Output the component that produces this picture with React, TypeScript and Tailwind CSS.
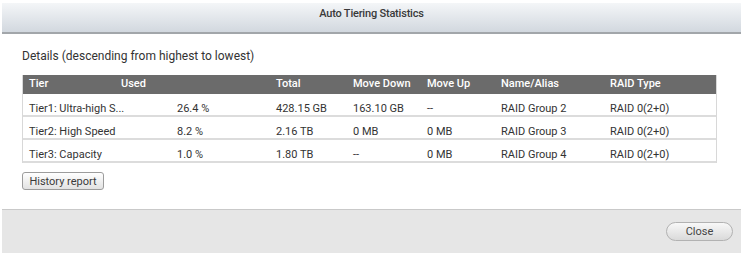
import React from "react";

const cols = "grid-cols-[92px_155px_77px_74px_74px_109px_1fr]";

const rows = [
  ["Tier1: Ultra-high S...", "26.4 %", "428.15 GB", "163.10 GB", "--", "RAID Group 2", "RAID 0(2+0)"],
  ["Tier2: High Speed", "8.2 %", "2.16 TB", "0 MB", "0 MB", "RAID Group 3", "RAID 0(2+0)"],
  ["Tier3: Capacity", "1.0 %", "1.80 TB", "--", "0 MB", "RAID Group 4", "RAID 0(2+0)"],
];

export default function App() {
  return (
    <div className="w-[745px] h-[253px] bg-white overflow-hidden font-['Roboto',sans-serif] pt-[3px] pl-[2px]">
      <div className="w-[739px] h-[250px] flex flex-col">
        <div className="h-[31px] shrink-0 bg-gradient-to-b from-[#f4f6f8] to-[#d2d8df] border-b-2 border-[#a2a6aa] flex items-center justify-center pb-[6px]">
          <span className="text-[11px] font-medium text-[#3a3a3a] tracking-[-0.2px]">Auto Tiering Statistics</span>
        </div>
        <div className="flex-1 px-[20px] pt-[14px]">
          <div className="text-[12px] leading-[16px] text-[#333]">Details (descending from highest to lowest)</div>
          <div className="mt-[11px] w-[695px] border-x border-[#d8d8d8]">
            <div className={`grid ${cols} h-[19px] bg-[#6b6b6b] items-center text-[11px] font-medium text-white`}>
              <div className="pl-[6px]">Tier</div>
              <div className="pl-[6px]">Used</div>
              <div className="pl-[6px]">Total</div>
              <div className="pl-[6px]">Move Down</div>
              <div className="pl-[6px]">Move Up</div>
              <div className="pl-[6px]">Name/Alias</div>
              <div className="pl-[6px]">RAID Type</div>
            </div>
            {rows.map((r, i) => (
              <div
                key={i}
                className={`grid ${cols} h-[23px] pt-[8px] leading-[13px] text-[11px] text-[#333] border-b-2 border-[#dcdcdc]`}
              >
                <div className="pl-[6px] whitespace-nowrap">{r[0]}</div>
                <div className="pl-[62px]">{r[1]}</div>
                <div className="pl-[6px]">{r[2]}</div>
                <div className="pl-[6px]">{r[3]}</div>
                <div className="pl-[6px]">{r[4]}</div>
                <div className="pl-[6px]">{r[5]}</div>
                <div className="pl-[6px]">{r[6]}</div>
              </div>
            ))}
          </div>
          <button className="mt-[9px] w-[82px] h-[18px] rounded-[3px] border border-[#9c9c9c] bg-gradient-to-b from-[#ffffff] to-[#e2e2e2] text-[11px] text-[#3a3a3a] flex items-center justify-center leading-none">
            History report
          </button>
        </div>
        <div className="h-[44px] shrink-0 bg-[#e6e6e6] border-t border-[#c9c9c9] flex items-center justify-end pr-[8px]">
          <button className="w-[67px] h-[19px] rounded-full border border-[#b2b2b2] bg-gradient-to-b from-[#f8f8f8] to-[#dadada] text-[11px] text-[#444] flex items-center justify-center leading-none">
            Close
          </button>
        </div>
      </div>
    </div>
  );
}
